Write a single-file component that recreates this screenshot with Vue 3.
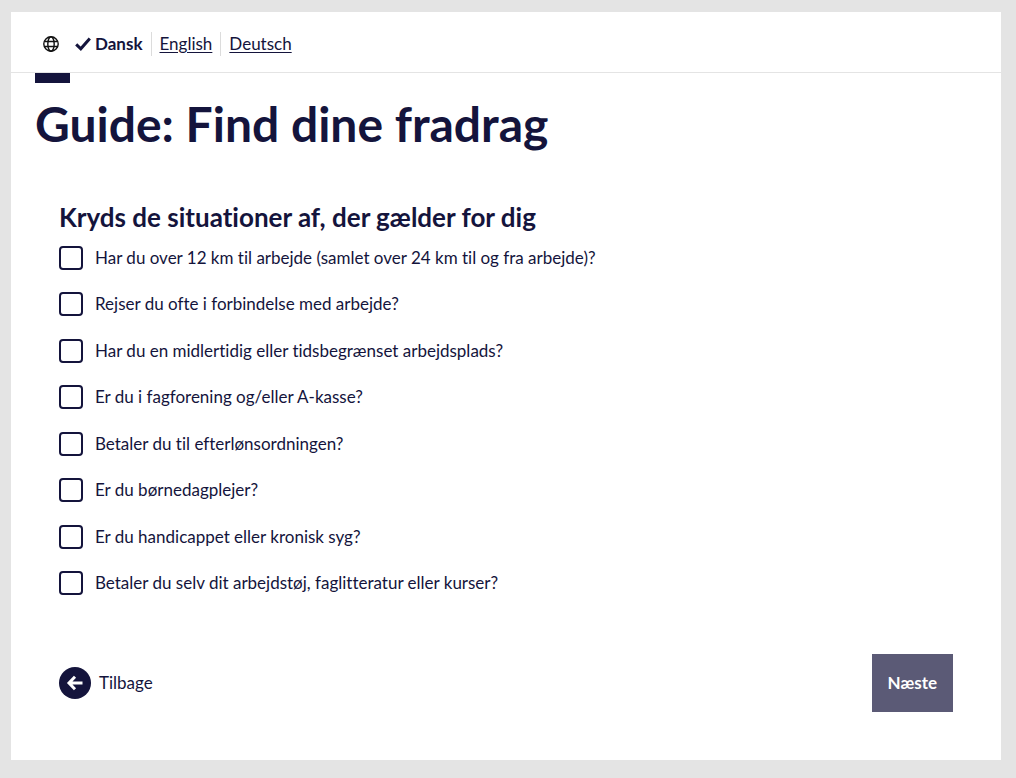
<script setup>
import { ref } from 'vue'

const languages = [
  { code: 'en', name: 'English' },
  { code: 'de', name: 'Deutsch' },
]

const situations = ref([
  { id: 'koersel', label: 'Har du over 12 km til arbejde (samlet over 24 km til og fra arbejde)?', checked: false },
  { id: 'rejse', label: 'Rejser du ofte i forbindelse med arbejde?', checked: false },
  { id: 'midlertidig', label: 'Har du en midlertidig eller tidsbegrænset arbejdsplads?', checked: false },
  { id: 'fagforening', label: 'Er du i fagforening og/eller A-kasse?', checked: false },
  { id: 'efterloen', label: 'Betaler du til efterlønsordningen?', checked: false },
  { id: 'dagplejer', label: 'Er du børnedagplejer?', checked: false },
  { id: 'handicap', label: 'Er du handicappet eller kronisk syg?', checked: false },
  { id: 'arbejdstoej', label: 'Betaler du selv dit arbejdstøj, faglitteratur eller kurser?', checked: false },
])
</script>

<template>
  <div class="page">
    <div class="sheet">
      <header class="topbar">
        <svg class="globe" viewBox="0 0 16 16" aria-hidden="true">
          <circle cx="8" cy="8" r="7.2" />
          <ellipse cx="8" cy="8" rx="3.2" ry="7.2" />
          <path d="M1.5 5.5h13M1.5 10.5h13" />
        </svg>
        <nav class="languages" aria-label="Sprog">
          <span class="language current">
            <svg class="tick" viewBox="0 0 16 14" aria-hidden="true">
              <path d="M1.2 7.4l4.6 4.4L14.8 1.4" />
            </svg>
            Dansk
          </span>
          <span v-for="l in languages" :key="l.code" class="language">
            <a href="#" :lang="l.code">{{ l.name }}</a>
          </span>
        </nav>
      </header>

      <main>
        <div class="accent"></div>
        <h1>Guide: Find dine fradrag</h1>
        <form class="guide" @submit.prevent>
          <fieldset>
            <legend>Kryds de situationer af, der gælder for dig</legend>
            <div class="options">
              <label v-for="s in situations" :key="s.id" class="option" :for="s.id">
                <input :id="s.id" v-model="s.checked" type="checkbox" />
                <span>{{ s.label }}</span>
              </label>
            </div>
          </fieldset>
          <div class="actions">
            <button type="button" class="back">
              <svg viewBox="0 0 32 32" aria-hidden="true">
                <circle cx="16" cy="16" r="16" />
                <path d="M23.5 16H10.5M16 9.8L10 16l6 6.2" />
              </svg>
              Tilbage
            </button>
            <button type="submit" class="next">Næste</button>
          </div>
        </form>
      </main>
    </div>
  </div>
</template>

<style>
body {
  margin: 0;
  background: #e4e4e4;
}
</style>

<style scoped>
.page {
  padding: 12px 15px 18px 11px;
  background: #e4e4e4;
  color: #14143c;
  font-family: Lato, "Open Sans", sans-serif;
  font-size: 17px;
  font-variant-ligatures: none;
  line-height: 24px;
}
.sheet {
  background: #fff;
}
.topbar {
  display: flex;
  align-items: center;
  gap: 16px;
  height: 60px;
  padding: 0 32px;
  border-bottom: 1px solid #e4e4e4;
  box-sizing: content-box;
}
.topbar svg {
  fill: none;
}
.globe {
  width: 16px;
  height: 16px;
  margin-top: 4px;
  stroke: #111;
  stroke-width: 1.4;
}
.languages {
  display: flex;
  margin-top: 4px;
}
.language {
  display: flex;
  align-items: center;
  gap: 4px;
  padding: 0 8px;
  border-left: 1px solid #dcdcdc;
}
.current {
  padding-left: 0;
  border-left: 0;
  font-weight: 700;
}
.tick {
  width: 16px;
  height: 14px;
  stroke: #14143c;
  stroke-width: 3;
}
.language a {
  color: inherit;
  text-underline-offset: 2px;
}
main {
  padding: 0 24px 48px;
}
.accent {
  width: 35px;
  height: 10px;
  background: #14143c;
}
h1 {
  margin: 11px 0 47px;
  font-size: 48px;
  font-weight: 700;
  line-height: 60px;
}
.guide {
  padding: 0 24px;
}
fieldset {
  min-width: 0;
  margin: 0;
  padding: 0;
  border: 0;
}
legend {
  padding: 0;
  font-size: 26px;
  font-weight: 700;
  line-height: 32px;
}
.options {
  display: flex;
  flex-direction: column;
  justify-content: space-between;
  min-height: 349px;
  margin-top: 13px;
}
.option {
  display: flex;
  align-items: center;
  gap: 12px;
}
.option input {
  appearance: none;
  flex: none;
  width: 24px;
  height: 24px;
  margin: 0;
  border: 2px solid #14143c;
  border-radius: 4px;
  background: #fff;
}
.option input:checked {
  background: #14143c;
}
.actions {
  display: flex;
  align-items: center;
  justify-content: space-between;
  margin-top: 59px;
}
button {
  border: 0;
  font: inherit;
  cursor: pointer;
}
.back {
  display: flex;
  align-items: center;
  gap: 8px;
  padding: 0;
  background: none;
  color: inherit;
}
.back svg {
  width: 32px;
  height: 32px;
}
.back circle {
  fill: #14143c;
}
.back path {
  fill: none;
  stroke: #fff;
  stroke-width: 3;
}
.next {
  padding: 17px 16px;
  background: #5b5a76;
  color: #fff;
  font-weight: 700;
}
</style>
